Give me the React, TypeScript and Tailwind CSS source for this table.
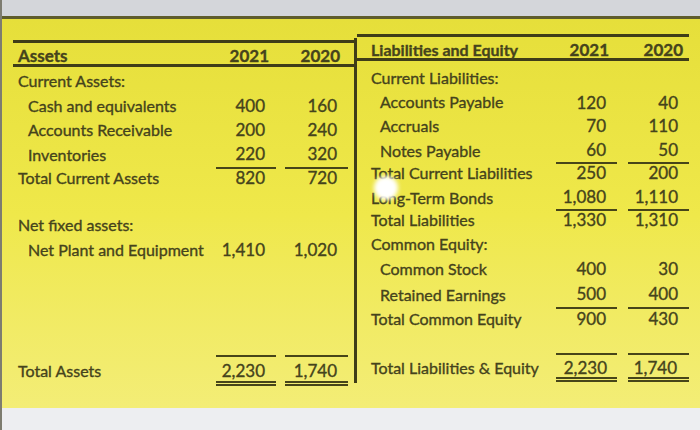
type Row = {
  label: string
  indent?: boolean
  a?: string
  b?: string
  h: string
  line?: string // padding under the underline, if the row is underlined
  glare?: boolean
}

const assetRows: Row[] = [
  { label: "Current Assets:", h: "h-[24px]" },
  { label: "Cash and equivalents", indent: true, a: "400", b: "160", h: "h-[24px]" },
  { label: "Accounts Receivable", indent: true, a: "200", b: "240", h: "h-[24px]" },
  { label: "Inventories", indent: true, a: "220", b: "320", h: "h-[24px]", line: "pb-[1px]" },
  { label: "Total Current Assets", a: "820", b: "720", h: "h-[24px]" },
  { label: "", h: "h-[24px]" },
  { label: "Net fixed assets:", h: "h-[24px]" },
  { label: "Net Plant and Equipment", indent: true, a: "1,410", b: "1,020", h: "h-[24px]" },
]

const liabilityRows: Row[] = [
  { label: "Current Liabilities:", h: "h-[23.5px]" },
  { label: "Accounts Payable", indent: true, a: "120", b: "40", h: "h-[23.5px]" },
  { label: "Accruals", indent: true, a: "70", b: "110", h: "h-[23.5px]" },
  { label: "Notes Payable", indent: true, a: "60", b: "50", h: "h-[23.5px]", line: "pb-[2px]" },
  { label: "Total Current Liabilities", a: "250", b: "200", h: "h-[23.5px]" },
  { label: "Long-Term Bonds", a: "1,080", b: "1,110", h: "h-[23.5px]", line: "pb-[2px]", glare: true },
  { label: "Total Liabilities", a: "1,330", b: "1,310", h: "h-[24.5px]" },
  { label: "Common Equity:", h: "h-[24.5px]" },
  { label: "Common Stock", indent: true, a: "400", b: "30", h: "h-[25px]" },
  { label: "Retained Earnings", indent: true, a: "500", b: "400", h: "h-[25px]", line: "pb-[1px]" },
  { label: "Total Common Equity", a: "900", b: "430", h: "h-[24px]" },
]

function NumCell({ value, line, pr }: { value?: string; line?: string; pr: string }) {
  if (line) {
    return (
      <div className={`h-full ${line}`}>
        <div className={`flex h-full items-center justify-end border-b-2 border-[#474519] text-[17px] ${pr}`}>{value}</div>
      </div>
    )
  }
  return <div className={`flex h-full items-center justify-end text-[17px] ${pr}`}>{value}</div>
}

function TotalCell({ value, pr, text }: { value: string; pr: string; text: string }) {
  return (
    <div className="flex flex-col border-t-2 border-[#474519]">
      <div className={`flex items-center justify-end text-[17px] ${text} ${pr}`}>{value}</div>
      <div className="h-[2px] bg-[#474519]" />
      <div className="mt-[1px] h-[2px] bg-[#474519]" />
    </div>
  )
}

export default function App() {
  return (
    <div className="flex h-[430px] w-[700px] flex-col border-l-2 border-[#7d7c70] bg-[#edeef1] font-['Lato',sans-serif] text-[16px] text-[#45431c] [-webkit-text-stroke:0.35px_#45431c]">
      <div className="h-[16px] bg-[#d4d6da]" />

      <div className="flex h-[392px] items-start border-t-[3px] border-[#5f5d2c] bg-gradient-to-b from-[#e6df3a] via-[#efe84a] to-[#f3ed76]">
        {/* Assets */}
        <div className="ml-[11px] mt-[21px] flex w-[341px] flex-col">
          <div className="grid h-[27px] grid-cols-[194px_60px_63px] items-center gap-x-[9px] border-y-[3px] border-[#3f3d18] text-[17px] font-bold">
            <div className="pl-[5px]">Assets</div>
            <div className="pr-[7px] text-right">2021</div>
            <div className="pr-[8px] text-right">2020</div>
          </div>
          <div className="h-[2px]" />
          {assetRows.map((r, i) => (
            <div key={i} className={`grid grid-cols-[194px_60px_63px] gap-x-[9px] ${r.h}`}>
              <div className={`flex items-center whitespace-nowrap ${r.indent ? "pl-[15px]" : "pl-[5px]"}`}>{r.label}</div>
              <NumCell value={r.a} line={r.line} pr="pr-[11px]" />
              <NumCell value={r.b} line={r.line} pr="pr-[11px]" />
            </div>
          ))}
          <div className="h-[94px]" />
          <div className="grid grid-cols-[194px_60px_63px] items-start gap-x-[9px]">
            <div className="mt-[2px] flex h-[24px] items-center pl-[5px] pt-[4px]">Total Assets</div>
            <TotalCell value="2,230" pr="pr-[11px]" text="h-[24px] pt-[4px]" />
            <TotalCell value="1,740" pr="pr-[11px]" text="h-[24px] pt-[4px]" />
          </div>
        </div>

        <div className="mt-[19px] h-[345px] w-[3px] bg-[#3f3d18]" />

        {/* Liabilities and equity */}
        <div className="mt-[15px] flex w-[332px] flex-col">
          <div className="grid h-[27px] grid-cols-[188px_61px_61px] items-center gap-x-[11px] border-y-[3px] border-[#3f3d18] font-bold">
            <div className="whitespace-nowrap pl-[14px]">Liabilities and Equity</div>
            <div className="pr-[8px] text-right text-[17px]">2021</div>
            <div className="pr-[6px] text-right text-[17px]">2020</div>
          </div>
          <div className="h-[5px]" />
          {liabilityRows.map((r, i) => (
            <div key={i} className={`grid grid-cols-[188px_61px_61px] gap-x-[11px] ${r.h}`}>
              <div className={`relative flex items-center whitespace-nowrap ${r.indent ? "pl-[23px]" : "pl-[14px]"}`}>
                {r.label}
                {/* camera glare over the text */}
                {r.glare && (
                  <div className="absolute left-[17px] top-[-7.5px] h-[24px] w-[24px] rounded-full bg-white blur-[2px]" />
                )}
              </div>
              <NumCell value={r.a} line={r.line} pr="pr-[11px]" />
              <NumCell value={r.b} line={r.line} pr="pr-[11px]" />
            </div>
          ))}
          <div className="h-[23px]" />
          <div className="grid grid-cols-[188px_61px_61px] items-start gap-x-[11px]">
            <div className="mt-[2px] flex h-[22px] items-center whitespace-nowrap pl-[14px] pt-[3px]">Total Liabilities &amp; Equity</div>
            <TotalCell value="2,230" pr="pr-[10px]" text="h-[22px] pt-[3px]" />
            <TotalCell value="1,740" pr="pr-[12px]" text="h-[22px] pt-[3px]" />
          </div>
        </div>
      </div>

      <div className="flex-1" />
    </div>
  )
}
